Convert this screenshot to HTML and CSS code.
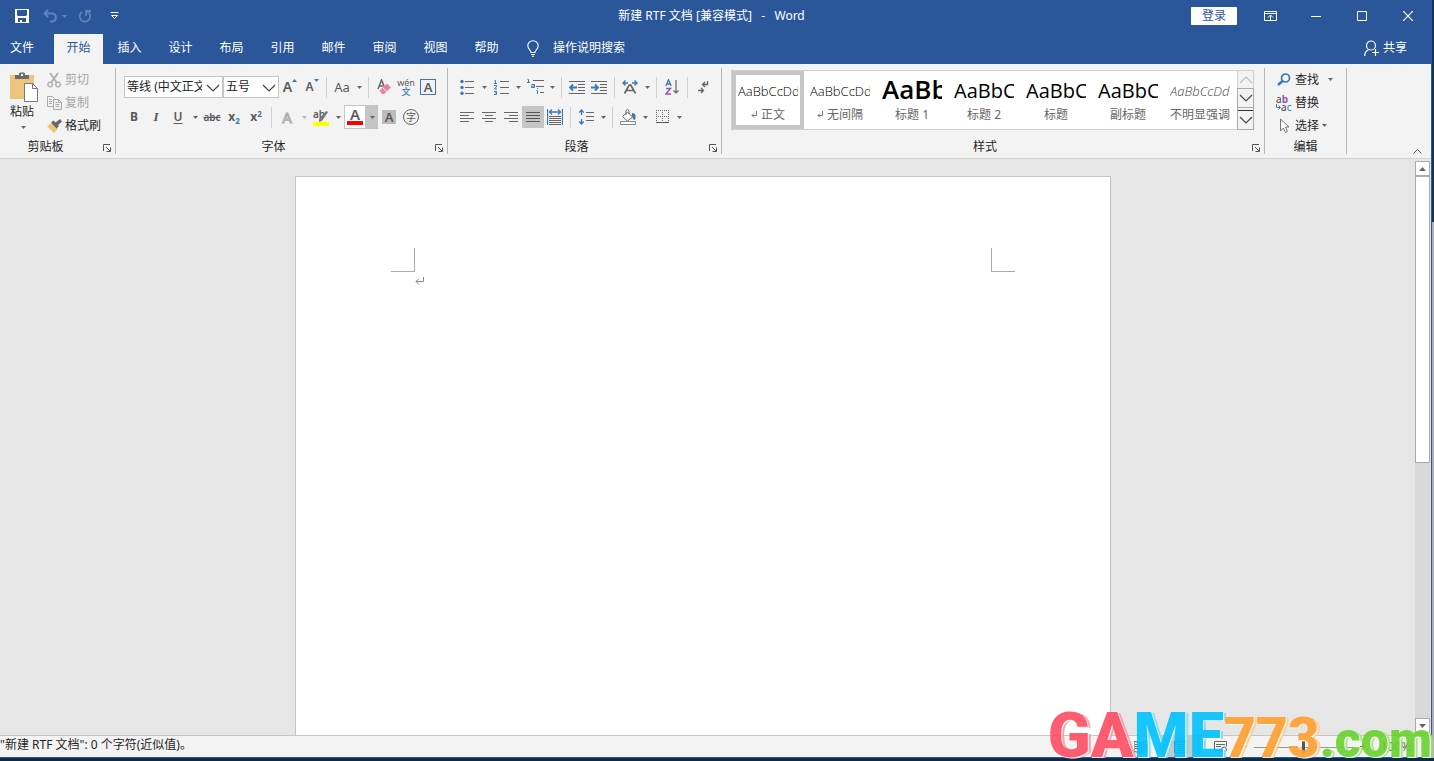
FILE: index.html
```html
<!DOCTYPE html>
<html lang="zh-CN">
<head>
<meta charset="utf-8">
<title>新建 RTF 文档 - Word</title>
<link rel="stylesheet" href="styles.css">
</head>
<body>
<svg class="defs" aria-hidden="true">
  <symbol id="caret" viewBox="0 0 5 3"><path d="M0 0h5L2.500 3z" fill="currentColor"/></symbol>
  <symbol id="chev" viewBox="0 0 14 8"><path d="M1 1l6 6 6-6" fill="none" stroke="currentColor" stroke-width="1.200"/></symbol>
  <symbol id="launch" viewBox="0 0 8 8"><path d="M.5 7V.5H7M3 3l4 4M7.500 3.500v4h-4" fill="none" stroke="#555"/></symbol>
</svg>
<div class="window">
  <header class="titlebar">
    <div class="quick">
      <button class="q" aria-label="保存"><svg width="14" height="14" viewBox="0 0 14 14"><path d="M0 0h14v14H0z" fill="#fff"/><path d="M2 1h10v5l-1 1H3L2 6zM3 9h8v4H7v-2H5v2H3z" fill="#2b579a"/></svg></button>
      <button class="q dim undo" aria-label="撤消"><svg width="15" height="14" viewBox="0 0 15 14"><path d="M5 1L1.500 4.500 5 8M2 4.500h7c5 0 5 7 1 8H7" fill="none" stroke="currentColor" stroke-width="2"/></svg><svg width="5" height="3"><use href="#caret"/></svg></button>
      <button class="q dim" aria-label="重复"><svg width="14" height="14" viewBox="0 0 14 14"><path d="M9 2.500a5.300 5.300 0 1 1-5 .500M8 7V2h5" fill="none" stroke="currentColor" stroke-width="1.800"/></svg></button>
      <button class="q custom" aria-label="自定义快速访问工具栏"><svg width="9" height="8" viewBox="0 0 9 8"><path d="M.5 .5h8M1.500 3.500l3 3 3-3z" fill="none" stroke="#fff"/></svg></button>
    </div>
    <h1>新建 RTF 文档 [兼容模式] &nbsp;&nbsp;-&nbsp;&nbsp; Word</h1>
    <div class="winctl">
      <button class="login">登录</button>
      <button class="wc" aria-label="功能区显示选项"><svg width="13" height="10" viewBox="0 0 13 10"><path d="M.5 .5h12v9H.5zM1 2.500h11M6.500 9V4.500M4 6.500L6.500 4 9 6.500" fill="none" stroke="#fff"/></svg></button>
      <button class="wc" aria-label="最小化"><svg width="10" height="10" viewBox="0 0 10 10"><path d="M0 5.500h10" stroke="#fff"/></svg></button>
      <button class="wc" aria-label="最大化"><svg width="10" height="10" viewBox="0 0 10 10"><path d="M.5 .5h9v9h-9z" fill="none" stroke="#fff"/></svg></button>
      <button class="wc" aria-label="关闭"><svg width="10" height="10" viewBox="0 0 10 10"><path d="M0 0l10 10M10 0L0 10" stroke="#fff" stroke-width="1.200"/></svg></button>
    </div>
  </header>
  <nav class="tabs">
    <button class="file">文件</button>
    <button class="active">开始</button>
    <button>插入</button>
    <button>设计</button>
    <button>布局</button>
    <button>引用</button>
    <button>邮件</button>
    <button>审阅</button>
    <button>视图</button>
    <button>帮助</button>
    <button class="tell"><svg width="12" height="17" viewBox="0 0 12 17"><path d="M4 12.500c0-2-3.200-3.500-3.200-6.800a5.200 5 0 0 1 10.400 0c0 3.300-3.200 4.800-3.200 6.800zM4 14.500h4M5 16.200h2" fill="none" stroke="#fff" stroke-width="1.100"/></svg>操作说明搜索</button>
    <button class="share"><svg width="15" height="16" viewBox="0 0 15 16"><circle cx="7" cy="5.500" r="4.500" fill="none" stroke="#fff" stroke-width="1.200"/><path d="M.6 16c0-3 1.400-5 3.900-6.500M11.500 9v7M8 12.500h7" fill="none" stroke="#fff" stroke-width="1.200"/></svg>共享</button>
  </nav>
  <div class="ribbon">
    <section class="group clip">
      <div class="body">
        <button class="paste">
          <svg width="28" height="30" viewBox="0 0 28 30"><path d="M0 3h24v24H0z" fill="#ecc57c"/><path d="M5 7V3h4V1.500L10 .5h4l1 1V3h4v4z" fill="#6a6a6a"/><path d="M11 2h2v2h-2z" fill="#f3f3f3"/><path d="M14.500 11.500h8l5 5v13h-13z" fill="#fff" stroke="#777"/><path d="M22.500 11.500v5h5" fill="none" stroke="#777"/></svg>
          <span>粘贴</span>
          <svg class="car" width="5" height="3"><use href="#caret"/></svg>
        </button>
        <div class="stack">
          <button class="row-btn off"><svg width="15" height="16" viewBox="0 0 15 16"><path d="M3 1l7 10M11 1L4 11" stroke="#aaa" stroke-width="1.700"/><circle cx="3.200" cy="12.500" r="2.300" fill="none" stroke="#aaa" stroke-width="1.300"/><circle cx="11" cy="12.500" r="2.300" fill="none" stroke="#aaa" stroke-width="1.300"/></svg>剪切</button>
          <button class="row-btn off"><svg width="15" height="16" viewBox="0 0 15 16"><path d="M6 11.500H.5v-10h5l2 2V5" fill="none" stroke="#aaa"/><path d="M6.500 4.500h5l3 3v7h-8zM11.500 4.500v3h3M2 4.500h3M2 6.500h3M2 8.500h3M8.500 9.500h4M8.500 11.500h4M8.500 7.500h2" fill="none" stroke="#aaa"/></svg>复制</button>
          <button class="row-btn"><svg width="15" height="16" viewBox="0 0 15 16"><path d="M0 8l5-3 6 6-4 4z" fill="#ecc57c"/><path d="M4 4.500l2.500-2 2 2L13 1l2 2.500L11 7l1 1-2.500 2.500z" fill="#666"/></svg>格式刷</button>
        </div>
      </div>
      <footer><span>剪贴板</span><button aria-label="剪贴板设置"><svg width="8" height="8"><use href="#launch"/></svg></button></footer>
    </section>

    <section class="group">
      <div class="body font">
        <div class="tools">
          <label class="combo wide"><select aria-label="字体"><option>等线 (中文正文)</option></select><svg width="14" height="8"><use href="#chev"/></svg></label>
          <label class="combo"><select aria-label="字号"><option>五号</option></select><svg width="14" height="8"><use href="#chev"/></svg></label>
          <button class="t grow" aria-label="增大字号">A<svg width="5" height="3" viewBox="0 0 5 3"><path d="M0 3h5L2.500 0z" fill="#3b78b5"/></svg></button>
          <button class="t grow small" aria-label="缩小字号">A<svg width="5" height="3" viewBox="0 0 5 3"><path d="M0 0h5L2.500 3z" fill="#3b78b5"/></svg></button>
          <i class="sep near"></i>
          <button class="t aa">Aa</button><button class="drop" aria-label="更改大小写"><svg width="5" height="3"><use href="#caret"/></svg></button>
          <i class="sep"></i>
          <button class="t" aria-label="清除格式"><svg width="16" height="16" viewBox="0 0 16 16"><path d="M2 10L5.500 1 8 7M3.200 7h4" fill="none" stroke="#666" stroke-width="1.500"/><path d="M3.500 11.500L11 4.500l4 4-7 6.500H6z" fill="#e8849a"/><path d="M6.500 8.500l4.500 4.500" stroke="#f3f3f3"/></svg></button>
          <button class="t pinyin"><span>wén</span><b>文</b></button>
          <button class="t" aria-label="字符边框"><span class="boxed">A</span></button>
        </div>
        <div class="tools">
          <button class="t bold">B</button>
          <button class="t ital">I</button>
          <button class="t under">U</button><button class="drop" aria-label="下划线"><svg width="5" height="3"><use href="#caret"/></svg></button>
          <button class="t strike">abc</button>
          <button class="t script">x<sub>2</sub></button>
          <button class="t script">x<sup>2</sup></button>
          <i class="sep"></i>
          <button class="t effect">A</button><button class="drop pale" aria-label="文本效果"><svg width="5" height="3"><use href="#caret"/></svg></button>
          <button class="t mark">ab<svg width="16" height="16" viewBox="0 0 16 16"><path d="M6 9l7-8 2 1-6 9-3 1z" fill="#777"/><path d="M0 12h16v4H0z" fill="#ff0"/></svg></button><button class="drop" aria-label="突出显示颜色"><svg width="5" height="3"><use href="#caret"/></svg></button>
          <button class="t color">A</button><button class="drop on" aria-label="字体颜色"><svg width="5" height="3"><use href="#caret"/></svg></button>
          <button class="t"><span class="shade">A</span></button>
          <button class="t"><span class="ring">字</span></button>
        </div>
      </div>
      <footer><span>字体</span><button aria-label="字体设置"><svg width="8" height="8"><use href="#launch"/></svg></button></footer>
    </section>

    <section class="group">
      <div class="body para">
        <div class="tools">
          <button class="t" aria-label="项目符号"><svg width="14" height="16" viewBox="0 0 14 16"><path d="M5 2.500h9M5 8.500h9M5 14.500h9" stroke="#666"/><circle cx="2" cy="2.500" r="1.700" fill="#3b78b5"/><circle cx="2" cy="8.500" r="1.700" fill="#3b78b5"/><circle cx="2" cy="14.300" r="1.700" fill="#3b78b5"/></svg></button><button class="drop" aria-label="项目符号库"><svg width="5" height="3"><use href="#caret"/></svg></button>
          <button class="t" aria-label="编号"><svg width="15" height="16" viewBox="0 0 15 16"><path d="M6 2.500h9M6 8.500h9M6 14.500h9" stroke="#666"/><path d="M.5 1.500h1V4M0 4.500h3M0 6.500h2.500v1.500L.5 9.500v.5H3M0 12.500h2.500v3H0M1 14h1.500" fill="none" stroke="#3b78b5"/></svg></button><button class="drop" aria-label="编号库"><svg width="5" height="3"><use href="#caret"/></svg></button>
          <button class="t" aria-label="多级列表"><svg width="17" height="16" viewBox="0 0 17 16"><path d="M6 1.500h11M9 7.500h8M13 13.500h4" stroke="#666"/><path d="M.5 .5h1V3M0 3.500h3M4.500 5.500h3v3h-3V7h3M9.500 11.500h1V15M10 9.500h1" fill="none" stroke="#3b78b5"/></svg></button><button class="drop" aria-label="多级列表库"><svg width="5" height="3"><use href="#caret"/></svg></button>
          <i class="sep"></i>
          <button class="t" aria-label="减少缩进量"><svg width="16" height="13" viewBox="0 0 16 13"><path d="M0 .5h16M9 3.500h7M9 6.500h7M9 9.500h7M0 12.500h16" stroke="#666"/><path d="M8 6.500H1.500M4 3.500l-3 3 3 3" fill="none" stroke="#3b78b5" stroke-width="1.800"/></svg></button>
          <button class="t" aria-label="增加缩进量"><svg width="16" height="13" viewBox="0 0 16 13"><path d="M0 .5h16M9 3.500h7M9 6.500h7M9 9.500h7M0 12.500h16" stroke="#666"/><path d="M0 6.500h6.500M4 3.500l3 3-3 3" fill="none" stroke="#3b78b5" stroke-width="1.800"/></svg></button>
          <i class="sep"></i>
          <button class="t" aria-label="中文版式"><svg width="16" height="14" viewBox="0 0 16 14"><path d="M2.500 13.500L7.200 5h1.600l4.700 8.500M4.500 10.500h7" fill="none" stroke="#666" stroke-width="1.700"/><path d="M6 3H1M3.500 .5L1 3l2.500 2.500M10 3h5M12.500 .5L15 3l-2.500 2.500" fill="none" stroke="#3b78b5" stroke-width="1.400"/></svg></button><button class="drop" aria-label="中文版式选项"><svg width="5" height="3"><use href="#caret"/></svg></button>
          <i class="sep"></i>
          <button class="t" aria-label="排序"><svg width="14" height="16" viewBox="0 0 14 16"><path d="M.8 7L3.500 .8 6.200 7M2 5h3" fill="none" stroke="#3b78b5" stroke-width="1.300"/><path d="M1 9.500h4.500L1 15h5" fill="none" stroke="#9259ac" stroke-width="1.400"/><path d="M11 1v13M8.500 11.500L11 14l2.500-2.500" fill="none" stroke="#666" stroke-width="1.200"/></svg></button>
          <i class="sep"></i>
          <button class="t" aria-label="显示编辑标记"><svg width="11" height="13" viewBox="0 0 11 13"><path d="M9.500 0v3.500H5M7 1L4.500 3.500 7 6M0 9.500h5M3 7l2.500 2.500L3 12" fill="none" stroke="#666" stroke-width="1.300"/></svg></button>
        </div>
        <div class="tools">
          <button class="t" aria-label="左对齐"><svg width="14" height="11" viewBox="0 0 14 11"><path d="M0 .5h14M0 3.500h9M0 6.500h14M0 9.500h9" stroke="#666"/></svg></button>
          <button class="t" aria-label="居中"><svg width="14" height="11" viewBox="0 0 14 11"><path d="M0 .5h14M3 3.500h8M0 6.500h14M3 9.500h8" stroke="#666"/></svg></button>
          <button class="t" aria-label="右对齐"><svg width="14" height="11" viewBox="0 0 14 11"><path d="M0 .5h14M5 3.500h9M0 6.500h14M5 9.500h9" stroke="#666"/></svg></button>
          <button class="t on" aria-label="两端对齐"><svg width="14" height="11" viewBox="0 0 14 11"><path d="M0 .5h14M0 3.500h14M0 6.500h14M0 9.500h14" stroke="#555"/></svg></button>
          <button class="t" aria-label="分散对齐"><svg width="16" height="16" viewBox="0 0 16 16"><path d="M.5 0v16M15.500 0v16M3 3h10M5 .5L2.500 3 5 5.500M11 .5L13.500 3 11 5.500" fill="none" stroke="#3b78b5" stroke-width="1.300"/><path d="M2 7.500h12M2 9.500h12M2 11.500h12M2 13.500h12M2 15.500h12" stroke="#666"/></svg></button>
          <i class="sep"></i>
          <button class="t" aria-label="行和段落间距"><svg width="15" height="16" viewBox="0 0 15 16"><path d="M7 3.500h8M7 7.500h8M7 11.500h8" stroke="#666"/><path d="M2.500 1v5M2.500 10v5M.3 3.500L2.500 1l2.200 2.500M.3 12.500L2.500 15l2.200-2.500" fill="none" stroke="#3b78b5" stroke-width="1.300"/></svg></button><button class="drop" aria-label="间距选项"><svg width="5" height="3"><use href="#caret"/></svg></button>
          <i class="sep"></i>
          <button class="t" aria-label="底纹"><svg width="17" height="16" viewBox="0 0 17 16"><path d="M12 4c4 0 4 3 3 7l-2-1-1-3z" fill="#3b78b5"/><path d="M2.500 7.500l5-4.500 5 5-5 4zM6 6V1.500Q7.500-.5 9 1.500V5" fill="#fff" stroke="#666"/><path d="M.5 12.500h15v3H.5z" fill="#fff" stroke="#888"/></svg></button><button class="drop" aria-label="底纹颜色"><svg width="5" height="3"><use href="#caret"/></svg></button>
          <button class="t" aria-label="边框"><svg width="13" height="14" viewBox="0 0 13 14"><path d="M0 .5h13M0 6.500h13M.5 0v12M6.500 0v12M12.500 0v12" stroke="#666" stroke-dasharray="1 1"/><path d="M0 12.500h13" stroke="#555"/></svg></button><button class="drop" aria-label="边框选项"><svg width="5" height="3"><use href="#caret"/></svg></button>
        </div>
      </div>
      <footer><span>段落</span><button aria-label="段落设置"><svg width="8" height="8"><use href="#launch"/></svg></button></footer>
    </section>

    <section class="group">
      <div class="body styles">
        <div class="gallery">
          <button class="style sel"><span class="pv">AaBbCcDd</span><span class="nm"><svg width="6" height="7" viewBox="0 0 6 7"><path d="M5.500 0v4.500H1M3 2.500L1 4.500l2 2" fill="none" stroke="#777"/></svg>正文</span></button>
          <button class="style"><span class="pv">AaBbCcDd</span><span class="nm"><svg width="6" height="7" viewBox="0 0 6 7"><path d="M5.500 0v4.500H1M3 2.500L1 4.500l2 2" fill="none" stroke="#777"/></svg>无间隔</span></button>
          <button class="style"><span class="pv h1">AaBb</span><span class="nm">标题 1</span></button>
          <button class="style"><span class="pv h2">AaBbC</span><span class="nm">标题 2</span></button>
          <button class="style"><span class="pv h2">AaBbC</span><span class="nm">标题</span></button>
          <button class="style"><span class="pv h2">AaBbC</span><span class="nm">副标题</span></button>
          <button class="style"><span class="pv em">AaBbCcDd</span><span class="nm">不明显强调</span></button>
          <div class="spin">
            <button class="pale" aria-label="上一行"><svg class="flip" width="14" height="8"><use href="#chev"/></svg></button>
            <button aria-label="下一行"><svg width="14" height="8"><use href="#chev"/></svg></button>
            <button class="more" aria-label="其他"><svg width="14" height="8"><use href="#chev"/></svg></button>
          </div>
        </div>
      </div>
      <footer><span>样式</span><button aria-label="样式窗格"><svg width="8" height="8"><use href="#launch"/></svg></button></footer>
    </section>

    <section class="group">
      <div class="body edit">
        <div class="stack">
          <button class="row-btn"><svg width="16" height="16" viewBox="0 0 16 16"><circle cx="9.500" cy="6" r="4" fill="none" stroke="#3b78b5" stroke-width="1.700"/><path d="M6.500 9L2 13" stroke="#3b78b5" stroke-width="2.500"/></svg>查找<svg class="car far" width="5" height="3"><use href="#caret"/></svg></button>
          <button class="row-btn"><span class="swap"><span>a<b>b</b></span><span><svg width="5" height="6" viewBox="0 0 5 6"><path d="M.5 0v3.500H4M2.500 1.500l2 2-2 2" fill="none" stroke="#3b78b5"/></svg>a<em>c</em></span></span>替换</button>
          <button class="row-btn"><svg width="16" height="16" viewBox="0 0 16 16"><path d="M4.500 1v12l3-3 2 4.500 2-1-2-4.500h3.500z" fill="#fff" stroke="#777"/></svg>选择<svg class="car" width="5" height="3"><use href="#caret"/></svg></button>
        </div>
      </div>
      <footer><span>编辑</span></footer>
    </section>
    <button class="collapse" aria-label="折叠功能区"><svg width="9" height="5" viewBox="0 0 9 5"><path d="M.5 4.500l4-4 4 4" fill="none" stroke="#555"/></svg></button>
  </div>
  <main class="workspace">
    <div class="canvas">
      <article class="page">
        <div class="marks"><i class="m left"></i><i class="m right"></i></div>
        <p><svg width="9" height="8" viewBox="0 0 9 8"><path d="M8.500 0v4.500H1M4 1.500l-3 3 3 3" fill="none" stroke="#888"/></svg></p>
      </article>
    </div>
    <div class="scroll">
      <button aria-label="向上滚动"><svg width="7" height="4" viewBox="0 0 7 4"><path d="M0 4h7L3.500 0z" fill="#666"/></svg></button>
      <div class="track"><div class="thumb"></div></div>
      <button aria-label="向下滚动"><svg width="7" height="4" viewBox="0 0 7 4"><path d="M0 0h7L3.500 4z" fill="#666"/></svg></button>
    </div>
  </main>
  <div class="status">
    <span class="msg">"新建 RTF 文档": 0 个字符(近似值)。</span>
    <button aria-label="阅读视图"><svg width="14" height="12" viewBox="0 0 14 12"><path d="M0 .5l6 1v10l-6-1zM13.500 .5l-6 1v10l6-1zM1 3.500l4 .5M1 5.500l4 .5M1 7.500l4 .5M9 4l4-.5M9 6l4-.5M9 8l4-.5" fill="none" stroke="#666"/></svg></button>
    <button class="cur" aria-label="页面视图"><svg width="14" height="12" viewBox="0 0 14 12"><path d="M.5 .5h13v11H.5zM3 3.500h8M3 5.500h8M3 7.500h8M3 9.500h8" fill="none" stroke="#666"/></svg></button>
    <button aria-label="Web 版式视图"><svg width="14" height="12" viewBox="0 0 14 12"><path d="M7 9.500H.5v-9h12v5M2 3.500h9M2 5.500h5" fill="none" stroke="#666"/><circle cx="10" cy="8.500" r="2.500" fill="none" stroke="#666"/></svg></button>
    <div class="zoom"><span>−</span><input type="range" aria-label="缩放" min="0" max="100" value="50"><span>+</span><output>100%</output></div>
  </div>
</div>
<div class="brand"><span class="red">GA</span><span class="blue">ME</span><span class="orange">773</span><span class="green">.com</span></div>
</body>
</html>
```
FILE: styles.css
```css
* { box-sizing: border-box; }
body {
  margin: 0;
  height: 100vh;
  padding: 0 2px 3px 0;
  overflow: hidden;
  background: linear-gradient(#17324d 0 222px, #aeb0b3 222px 758px, #0d2a47 758px);
  font: 12px/16px "Noto Sans", "Noto Sans CJK SC", sans-serif;
  color: #262626;
}
button {
  display: flex;
  align-items: center;
  justify-content: center;
  margin: 0;
  padding: 0;
  border: 0;
  background: none;
  font: inherit;
  color: inherit;
  white-space: nowrap;
}
svg { flex: none; display: block; }
.defs { position: absolute; width: 0; height: 0; }
.window {
  height: 100%;
  display: flex;
  flex-direction: column;
  border: solid #2b579a;
  border-width: 0 1px 1px 0;
  background: #e6e6e6;
}

.titlebar { display: grid; grid-template-columns: 1fr auto 1fr; align-items: center; height: 32px; background: #2b579a; color: #fff; }
.titlebar h1 { margin: 0; padding-right: 8px; font: inherit; }
.quick { display: flex; align-items: center; padding-left: 15px; }
.undo { gap: 4px; margin-left: 14px; }
.q.dim { color: #5f82b8; }
.q.dim + .q { margin-left: 11px; }
.q.dim + .custom { margin-left: 18px; }
.winctl { display: flex; justify-content: flex-end; align-items: center; padding-bottom: 1px; }
.login { width: 46px; height: 18px; margin-right: 10px; background: #fff; color: #2b579a; border-radius: 1px; }
.wc { width: 46px; height: 30px; }

.tabs { display: flex; gap: 2px; height: 32px; background: #2b579a; color: #fff; }
.tabs button { min-width: 49px; height: 30px; margin-top: 2px; padding-bottom: 2px; }
.tabs .file { min-width: 44px; margin-right: 8px; }
.tabs .active { background: #f3f3f3; color: #2b579a; }
.tabs .tell { gap: 14px; margin-left: 14px; }
.tabs .share { gap: 4px; margin: 2px 24px 0 auto; min-width: 0; }

.ribbon { display: flex; height: 95px; padding: 4px 0; background: #f3f3f3; border-bottom: 1px solid #d2d2d2; }
.group { display: flex; flex-direction: column; border-right: 1px solid #b8b8b8; }
.body { height: 72px; display: flex; }
.group footer { display: flex; align-items: center; height: 14px; }
.group footer span { flex: 1; text-align: center; }
.group footer button { width: 16px; height: 12px; align-self: end; }
.clip footer span { padding-right: 8px; }
.clip .body { padding: 0 14px 0 10px; gap: 9px; }
.paste { flex-direction: column; justify-content: flex-start; align-items: flex-start; padding-top: 4px; }
.paste .car { margin: 6px 0 0 11px; }
.paste span { margin-top: 2px; }
.stack { display: flex; flex-direction: column; }
.row-btn { justify-content: flex-start; height: 23px; gap: 3px; }
.off { color: #a6a6a6; }
.car, .drop { color: #666; }
.far { margin-left: 6px; }

.font, .para { flex-direction: column; gap: 8px; padding: 8px 8px 0 7px; }
.para { padding: 8px 7px 0 8px; }
.tools { display: flex; align-items: center; height: 22px; }
.t { position: relative; width: 22px; height: 22px; color: #5a5a5a; }
.drop { width: 12px; height: 22px; }
.sep { width: 1px; height: 21px; margin: 0 4px; background: #d0d0d0; }
.drop + .sep, .sep.near { margin-left: 3px; }
.drop.pale { color: #b5b5b5; }
.combo { position: relative; display: block; width: 56px; height: 22px; }
.combo.wide { width: 99px; margin-left: 1px; }
.combo select {
  width: 100%;
  height: 22px;
  margin: 0;
  padding: 0 20px 0 2px;
  border: 1px solid #c6c6c6;
  border-radius: 0;
  background: #fff;
  appearance: none;
  font: inherit;
  color: #222;
}
.combo svg { position: absolute; right: 3px; top: 8px; color: #444; }
.grow { font-size: 14px; font-weight: 600; }
.grow svg { align-self: flex-start; margin-top: 3px; }
.grow.small { font-size: 12px; }
.aa { font-size: 13px; }
.pinyin { flex-direction: column; font-size: 9px; line-height: 8px; }
.pinyin b { font-weight: 500; font-size: 9px; line-height: 9px; color: #3b78b5; }
.boxed { width: 16px; height: 16px; border: 1px solid #3b78b5; font-weight: 600; font-size: 13px; line-height: 14px; }
.bold { font-weight: 700; }
.ital { font: italic 700 13px "Liberation Serif", serif; }
.under { font-weight: 600; text-decoration: underline; text-underline-offset: 2px; }
.strike { font-size: 10px; font-weight: 600; text-decoration: line-through; }
.script { font-weight: 700; }
.script sub, .script sup { font-size: 8px; line-height: 8px; color: #3b78b5; }
.script sub { align-self: flex-end; margin-bottom: 3px; }
.script sup { align-self: flex-start; margin-top: 4px; }
.effect { font-size: 15px; color: #f3f3f3; -webkit-text-stroke: 1px #aaa; }
.mark { align-items: flex-start; justify-content: flex-start; padding-left: 3px; font-size: 10px; line-height: 16px; font-weight: 600; }
.mark svg { position: absolute; left: 3px; top: 4px; }
.color { height: 24px; border: 1px solid #c6c6c6; background: linear-gradient(#f00, #f00) 2px 15px / 16px 4px no-repeat #fff; align-items: flex-start; font-size: 15px; font-weight: 600; line-height: 16px; }
.on { background: #c5c5c5; }
.drop.on { height: 24px; }
.shade { width: 14px; height: 14px; background: #bcbcbc; font-size: 13px; line-height: 14px; font-weight: 600; }
.ring { width: 16px; height: 16px; border: 1px solid #666; border-radius: 50%; font-size: 10px; line-height: 14px; }

.styles { padding: 2px 10px 0 9px; }
.gallery { display: flex; height: 60px; border: 1px solid #d0d0d0; background: #fff; }
.style { flex-direction: column; justify-content: flex-start; align-items: stretch; width: 72px; padding: 6px 6px 0; }
.style.sel { box-shadow: inset 0 0 0 4px #c6c6c6; }
.pv { overflow: hidden; height: 28px; text-align: left; font-family: "Open Sans", sans-serif; font-size: 13px; font-weight: 300; line-height: 28px; color: #000; }
.pv.h1 { font-size: 26px; line-height: 25px; font-weight: 600; }
.pv.h2 { font-size: 20px; font-weight: 400; }
.pv.em { font-style: italic; color: #444; }
.nm { display: flex; align-items: center; justify-content: center; gap: 4px; height: 19px; color: #666; }
.style .nm { margin: 0 -6px; }
.spin { display: flex; flex-direction: column; width: 17px; margin: -1px -1px -1px 1px; background: #f3f3f3; color: #444; }
.spin button { flex: 1; border: 1px solid #ababab; }
.spin button + button { margin-top: -1px; }
.spin .pale { border-color: #d0d0d0; color: #c0c0c0; }
.spin .more { background: linear-gradient(#333, #333) 0 2px / 100% 1px no-repeat; padding-top: 4px; }
.flip { transform: rotate(180deg); }

.edit { padding: 0 10px 0 11px; }
.edit .stack { width: 60px; }
.swap { width: 16px; display: flex; flex-direction: column; font-size: 10px; line-height: 8px; color: #444; }
.swap span { display: flex; align-items: center; }
.swap b { color: #9259ac; }
.swap em { font-style: normal; color: #3b78b5; }
.collapse { align-self: flex-end; margin: 0 9px 0 auto; }

.workspace { flex: 1; min-height: 0; display: flex; }
.canvas { flex: 1; overflow: hidden; display: flex; justify-content: center; padding: 17px 9px 0 0; }
.page { width: 816px; height: 1100px; flex: none; padding: 71px 95px; background: #fff; border: 1px solid #c6c6c6; }
.marks { display: flex; justify-content: space-between; }
.m { width: 24px; height: 24px; border-bottom: 1px solid #aaa; }
.left { border-right: 1px solid #aaa; }
.right { border-left: 1px solid #aaa; }
.page p { margin: 5px 24px; }
.scroll { width: 15px; margin: 2px 1px 2px 0; display: flex; flex-direction: column; background: #d9d9d9; }
.scroll button { height: 15px; border: 1px solid #ababab; background: #fff; }
.track { flex: 1; }
.thumb { height: 53%; border: 1px solid #ababab; background: #fff; }

.status { display: flex; align-items: center; height: 22px; background: #f3f3f3; border-top: 1px solid #c6c6c6; }
.msg { flex: 1; padding-bottom: 3px; }
.status button { width: 40px; height: 21px; }
.status .cur { background: #c8c8c8; }
.zoom { display: flex; align-items: center; gap: 6px; padding-right: 20px; color: #666; }
.zoom input { width: 100px; height: 12px; margin: 0; appearance: none; background: linear-gradient(#999, #999) 0 6px / 100% 1px no-repeat; }
.zoom input::-webkit-slider-thumb { appearance: none; width: 3px; height: 12px; background: #555; }
.zoom output { margin-left: 8px; }

.brand { position: absolute; right: 2px; bottom: -3px; display: flex; align-items: baseline; font: 900 63px/48px Roboto, sans-serif; white-space: nowrap; pointer-events: none; }
.brand span { opacity: .9; }
.red { color: #ff4d63; text-shadow: 1px 1px #fff, 3px 1px #ff9aa6; }
.blue { color: #00c2ff; text-shadow: 1px 1px #fff, 3px 1px #7fdcf8; }
.orange { color: #ff9f30; font-size: 55px; text-shadow: 1px 1px #fff, 3px 1px #ffcb8c; }
.green { color: #6ad22f; font-size: 50px; text-shadow: 1px 1px #fff, 3px 1px #a8e486; }
```
